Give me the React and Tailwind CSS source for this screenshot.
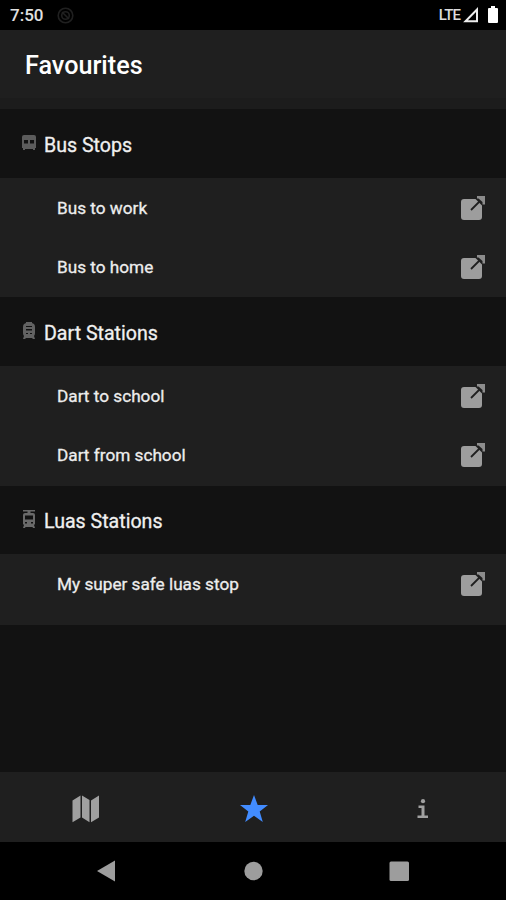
function BusIcon() {
  return (
    <svg width="16" height="18" viewBox="0 0 16 18" fill="#5c5c5c">
      <path
        fillRule="evenodd"
        d="M3 1h10q2 0 2 2v11h-1v2h-2v-1H4v1H2v-2H1V3q0-2 2-2zM3 6v3.500h4V6zM9 6v3.500h4V6z"
      />
    </svg>
  );
}

function TrainIcon() {
  return (
    <svg width="16" height="18" viewBox="0 0 16 18" fill="#626262">
      <path
        fillRule="evenodd"
        d="M5 0h6v1l2 1q1 1 1 3v6q0 2-1 3l1 3h-2l-1-1H5l-1 1H2l1-3q-1-1-1-3V5q0-2 1-3l2-1zM5 4v1h6V4zM5 7v1.500h6V7zM5 11v1h2v-1zM9 11v1h2v-1z"
      />
    </svg>
  );
}

function TramIcon() {
  return (
    <svg width="16" height="19" viewBox="0 0 16 19" fill="#6a6a6a">
      <path
        fillRule="evenodd"
        d="M2 0h12v1.500H9.500V3H12q2 0 2 2v9l-1 1 1 3h-2l-.5-1h-7L4 18H2l1-3-1-1V5q0-2 2-2h2.500V1.500H2zM4 5.500v4h8v-4zM4 12v1.500h2V12zM10 12v1.500h2V12z"
      />
    </svg>
  );
}

function OpenIcon() {
  return (
    <svg width="26" height="26" viewBox="0 0 26 26">
      <rect x="1" y="4" width="21" height="21" rx="3" fill="#9d9d9d" />
      <path d="M15.500 0H26v10.500h-4L15.500 4z" fill="#1f1f1f" />
      <path d="M11 15L20 6" stroke="#1f1f1f" strokeWidth="1.800" />
      <path d="M17 1h8v8.500h-2.500V7l-4-3.500H17z" fill="#8c8c8c" />
    </svg>
  );
}

function MapIcon() {
  return (
    <svg width="28" height="28" viewBox="0 0 28 28" fill="#a0a0a0">
      <path d="M.5 5.500L8.500.5v22L.5 27.300zM10 .5l7.500 4.500v22.300L10 22.500zM19 5.500L27 .5v22l-8 4.800z" />
    </svg>
  );
}

function StarIcon() {
  return (
    <svg width="28" height="28" viewBox="0 0 28 28" fill="#428cff">
      <path d="M14 0l3.700 10H28l-8.300 6.500L22.800 27 14 20.800 5.200 27l3.100-10.500L0 10h10.300z" />
    </svg>
  );
}

function InfoIcon() {
  return (
    <svg width="12" height="20" viewBox="0 0 12 20" fill="#a0a0a0">
      <circle cx="6" cy="2.200" r="2.100" />
      <path d="M1.500 6.500h6v10H11V19H.5v-2.500h4V9h-3z" />
    </svg>
  );
}

const sections = [
  { title: "Bus Stops", Icon: BusIcon, stops: ["Bus to work", "Bus to home"], head: "h-[69px]", size: "h-[119px]" },
  { title: "Dart Stations", Icon: TrainIcon, stops: ["Dart to school", "Dart from school"], head: "h-[69px]", size: "h-[120px]" },
  { title: "Luas Stations", Icon: TramIcon, stops: ["My super safe luas stop"], head: "h-[68px]", size: "h-[71px]" },
];

function StatusBar() {
  return (
    <div className="flex h-[30px] shrink-0 items-center bg-black pl-[10px] pr-[7px]">
      <span className="pt-[2px] text-[17px] font-medium text-[#e0e0e0]">7:50</span>
      <svg className="ml-[14px]" width="17" height="17" viewBox="0 0 17 17" fill="none" stroke="#202020" strokeWidth="1.600">
        <circle cx="8.500" cy="8.500" r="7.300" />
        <circle cx="8.500" cy="8.500" r="3.800" />
        <path d="M5 5l7 7" />
      </svg>
      <span className="ml-auto pt-px text-[15px] font-medium tracking-[-0.9px] text-[#dcdcdc]">LTE</span>
      <svg className="ml-[3px]" width="16" height="16" viewBox="0 0 16 16" fill="none" stroke="#ededed" strokeWidth="2">
        <path d="M2.500 14.300H14V2.500z" />
      </svg>
      <svg className="ml-[8px]" width="12" height="18" viewBox="0 0 12 18" fill="#fff">
        <path d="M4 0h4v2h2q1 0 1 1v13q0 1-1 1H2q-1 0-1-1V3q0-1 1-1h2z" />
      </svg>
    </div>
  );
}

function Section({ title, Icon, stops, head, size }) {
  return (
    <section>
      <div className={`flex items-center pl-[21px] ${head}`}>
        <span className="mb-[1px]">
          <Icon />
        </span>
        <h2 className="ml-[7px] mt-[4px] text-[19.6px] font-normal text-[#f0f0f0] [-webkit-text-stroke:0.3px_#f0f0f0]">{title}</h2>
      </div>
      <ul className={`bg-[#1f1f1f] ${size}`}>
        {stops.map((stop) => (
          <li key={stop} className="flex h-[59px] items-center justify-between pl-[57px] pr-[20px] pt-[2px]">
            <span className="pt-px text-[17.2px] text-[#ededed] [-webkit-text-stroke:0.3px_#ededed]">{stop}</span>
            <span className="pb-px">
              <OpenIcon />
            </span>
          </li>
        ))}
      </ul>
    </section>
  );
}

export default function App() {
  return (
    <div className="flex h-[900px] w-[506px] flex-col overflow-hidden bg-[#121212] font-[Roboto,sans-serif]">
      <StatusBar />
      <header className="h-[79px] shrink-0 border-b-[11px] border-[#1c1c1c] bg-[#1f1f1f] pl-[25px] pt-[18px]">
        <h1 className="text-[25.2px] font-medium leading-[36px] text-white">Favourites</h1>
      </header>
      <main className="flex-1">
        {sections.map((section) => (
          <Section key={section.title} {...section} />
        ))}
      </main>
      <nav className="grid h-[70px] shrink-0 grid-cols-3 place-items-center bg-[#1f1f1f] pl-[2px] pt-[3px]">
        <MapIcon />
        <StarIcon />
        <span className="pl-[2px]">
          <InfoIcon />
        </span>
      </nav>
      <div className="flex h-[58px] shrink-0 bg-black pl-[96px] pt-[18px]">
        <svg width="314" height="22" viewBox="0 0 314 22" fill="#9d9d9d">
          <path d="M1 11L19 .5v21z" />
          <circle cx="157.500" cy="11" r="9.200" />
          <rect x="293.500" y="1.500" width="19.500" height="19.500" rx="1.500" />
        </svg>
      </div>
    </div>
  );
}
